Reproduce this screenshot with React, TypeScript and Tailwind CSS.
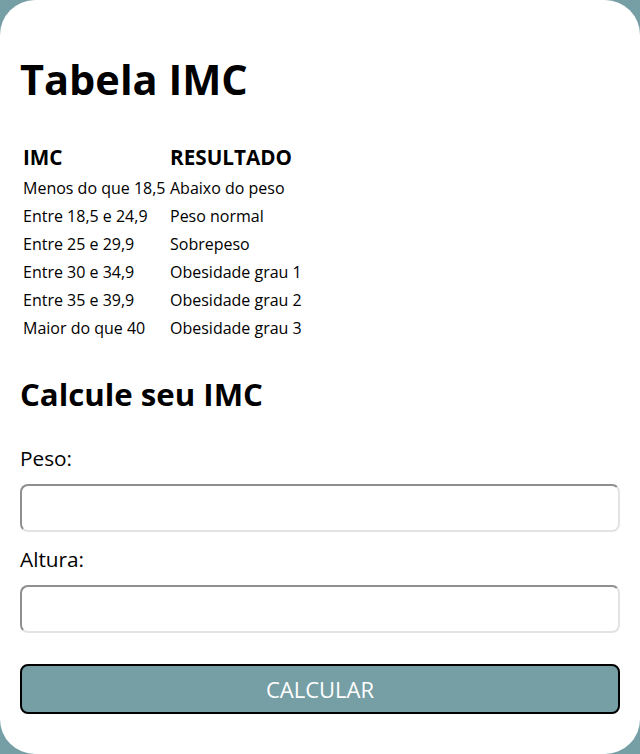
import React from "react";

const rows: [string, string][] = [
  ["Menos do que 18,5", "Abaixo do peso"],
  ["Entre 18,5 e 24,9", "Peso normal"],
  ["Entre 25 e 29,9", "Sobrepeso"],
  ["Entre 30 e 34,9", "Obesidade grau 1"],
  ["Entre 35 e 39,9", "Obesidade grau 2"],
  ["Maior do que 40", "Obesidade grau 3"],
];

const inputCls =
  "block w-full h-[48px] rounded-[8px] border-2 border-t-[#8f8f8f] border-l-[#8f8f8f] border-b-[#e3e3e3] border-r-[#e3e3e3] bg-white outline-none px-2 text-[16px]";

export default function App() {
  return (
    <div
      className="min-h-[754px] bg-[#769ea5] text-black"
      style={{ fontFamily: '"Open Sans", "Liberation Sans", sans-serif' }}
    >
      <div className="min-h-[754px] bg-white rounded-[35px] px-5 pt-[52px] pb-10">
        <h1 className="text-[41.5px] font-bold leading-[54px]">Tabela IMC</h1>

        <div className="mt-[37px] pl-[3px]">
          <div className="flex h-[28px] items-center text-[20.7px] font-bold leading-[28px]">
            <div className="w-[147px]">IMC</div>
            <div>RESULTADO</div>
          </div>
          <div className="mt-[3px]">
            {rows.map(([a, b]) => (
              <div key={a} className="flex h-[28px] text-[16px] leading-[28px]">
                <div className="w-[147px] whitespace-nowrap">{a}</div>
                <div className="whitespace-nowrap">{b}</div>
              </div>
            ))}
          </div>
        </div>

        <h2 className="mt-[32px] text-[31.2px] font-bold leading-[40px]">Calcule seu IMC</h2>

        <label className="block mt-[30px] text-[20.8px] leading-[28px]">Peso:</label>
        <input type="text" className={`${inputCls} mt-[12px]`} />

        <label className="block mt-[13px] text-[20.8px] leading-[28px]">Altura:</label>
        <input type="text" className={`${inputCls} mt-[12px]`} />

        <button className="mt-[31px] block w-full h-[50px] rounded-[8px] border-2 border-black bg-[#769ea5] text-white text-[22px] leading-[28px]">
          CALCULAR
        </button>
      </div>
    </div>
  );
}
